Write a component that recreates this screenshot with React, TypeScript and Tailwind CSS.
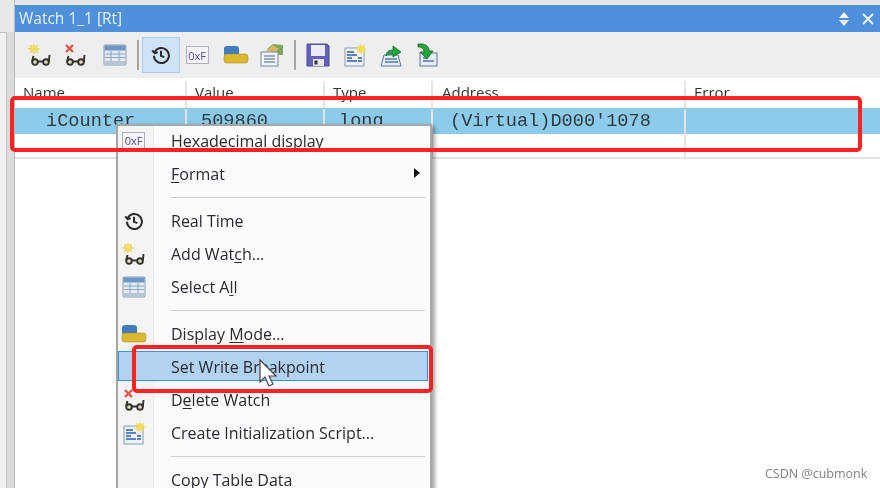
import type { ReactNode } from "react";

const Glasses = () => (
    <g fill="none" stroke="#33332c" strokeWidth="1.900">
        <circle cx="7" cy="19" r="2.800" fill="#e2decb" />
        <circle cx="18" cy="19" r="2.800" fill="#e2decb" />
        <path d="M9.500 18.500h6M20.800 19 21.500 12M4.200 18l1.300-5" />
    </g>
);

const AddWatchIcon = () => (
    <svg width="24" height="24" viewBox="0 0 24 24">
        <Glasses />
        <path d="M6 1l1 2.500 2.500-1.500-.5 3 3 1-3 1 .5 3-2.500-1.500-1 2.500-1-2.500-2.500 1.500.5-3-3-1 3-1-.5-3 2.500 1.500z" fill="#f3dd66" stroke="#e9cf50" strokeWidth="0.5" />
    </svg>
);

const DeleteWatchIcon = () => (
    <svg width="24" height="24" viewBox="0 0 24 24">
        <Glasses />
        <path d="M3 2l7 7M10 2l-7 7" stroke="#e5574a" strokeWidth="2.400" />
    </svg>
);

const TableIcon = () => (
    <svg width="24" height="24" viewBox="0 0 24 24">
        <rect x="1" y="2" width="22" height="20" rx="1" fill="#e3e9f1" stroke="#8a9cb3" />
        <rect x="1.500" y="2.500" width="21" height="5" fill="#6e95c4" />
        <rect x="1.500" y="18" width="21" height="3.500" fill="#b9c6d6" />
        <path d="M8 8v10M16 8v10M2 11h20M2 14.500h20" stroke="#8ea6c4" strokeWidth="1" />
    </svg>
);

const ClockIcon = () => (
    <svg width="20" height="20" viewBox="0 0 24 24" fill="none" stroke="#2a2a2a" strokeWidth="2.400">
        <path d="M4.500 8.500A9 9 0 1 1 3.500 13" />
        <path d="M1.500 6.500l3 3.500 3.500-1.500" />
        <path d="M12 7v6l4 1.500" />
    </svg>
);

const HexIcon = () => (
    <div className="flex h-[18px] w-[23px] items-center justify-center border border-[#b0b0ba] bg-[#f4f4fa] text-[11px] leading-none font-medium text-[#55499f]">
        0xF
    </div>
);

const ModeIcon = () => (
    <svg width="26" height="24" viewBox="0 0 26 24">
        <rect x="1" y="3" width="15" height="10" rx="3" fill="#3f7dbc" />
        <rect x="1" y="11" width="24" height="9" rx="3" fill="#d9b832" stroke="#ab8e20" strokeWidth="0.6" />
    </svg>
);

const PropsIcon = () => (
    <svg width="26" height="24" viewBox="0 0 26 24">
        <path d="M8 6l6-5 10 1v10h-4z" fill="#7fa65a" />
        <path d="M7 8l7-6 6 4-4 4z" fill="#d8b868" />
        <rect x="2" y="9" width="17" height="14" fill="#f2f4f8" stroke="#7a8798" />
        <path d="M5 13h11M5 16h11M5 19h11" stroke="#7c93b0" strokeWidth="1.400" />
    </svg>
);

const SaveIcon = () => (
    <svg width="24" height="24" viewBox="0 0 24 24">
        <path d="M1 1h20l2 2v20H1z" fill="#6660b8" stroke="#4d4896" />
        <rect x="5" y="2" width="14" height="11" fill="#eceaf6" />
        <rect x="7" y="16" width="11" height="7" fill="#e6e6ee" />
        <rect x="8.500" y="17.500" width="3" height="4" fill="#333" />
    </svg>
);

const ScriptIcon = () => (
    <svg width="24" height="24" viewBox="0 0 24 24">
        <rect x="2" y="5" width="19" height="18" fill="#eef2f8" stroke="#8a9ab0" />
        <path d="M4 9h7M4 12h10M4 15h5M4 18h10M15 15h4M15 18h4" stroke="#2f5ea8" strokeWidth="1.600" />
        <path d="M18 0l1 3 3-1-1 3 3 1-3 1 1 3-3-1-1 3-1-3-3 1 1-3-3-1 3-1-1-3 3 1z" fill="#f5dc5c" />
    </svg>
);

const ExportIcon = () => (
    <svg width="24" height="24" viewBox="0 0 24 24">
        <path d="M5 12h14l3 11H2z" fill="#e8eef6" stroke="#5f7692" />
        <path d="M6 16h12M6 19h13" stroke="#4f78a8" strokeWidth="1.400" />
        <path d="M7 13c0-4 3-6 7-6V3l8 6-8 5v-3c-3 0-5 0-7 2z" fill="#22a53c" stroke="#14682a" strokeWidth="0.8" />
    </svg>
);

const ImportIcon = () => (
    <svg width="24" height="24" viewBox="0 0 24 24">
        <rect x="5" y="10" width="17" height="13" fill="#e8eef6" stroke="#5f7692" />
        <path d="M8 15h4M8 18h11" stroke="#4f78a8" strokeWidth="1.400" />
        <path d="M3 1h5c4 1 6 3 6 7h4l-6 8-7-7h4c0-3-2-5-6-5z" fill="#22a53c" stroke="#14682a" strokeWidth="0.8" />
    </svg>
);

const Tool = ({ left, children, active = false }: { left: number; children: ReactNode; active?: boolean }) => (
    <div
        className={`flex h-[36px] w-[38px] shrink-0 items-center justify-center ${active ? "border border-[#a8cdf0] bg-[#cfe3f6]" : ""}`}
        style={{ marginLeft: left }}
    >
        {children}
    </div>
);

const Divider = ({ left }: { left: number }) => (
    <div className="h-[30px] w-[2px] shrink-0 bg-[#a5a5a5]" style={{ marginLeft: left }} />
);

const Cell = ({ w, children, mono = false, pad = 8 }: { w: number; children?: ReactNode; mono?: boolean; pad?: number }) => (
    <div
        className={`h-full shrink-0 overflow-hidden border-r-2 border-[#e4e4e4] whitespace-pre ${mono ? "font-['Liberation_Mono',monospace] text-[18.6px] leading-[25px] text-[#2e3a44]" : ""}`}
        style={{ width: w, paddingLeft: pad }}
    >
        {children}
    </div>
);

const MenuItem = ({ icon, children, arrow = false, hovered = false }: { icon?: ReactNode; children: ReactNode; arrow?: boolean; hovered?: boolean }) => (
    <div className="relative flex h-[33px] items-center">
        {hovered && <div className="absolute top-[1px] right-[2px] bottom-[2px] left-0 border border-[#3d8edb] bg-[#b1d2f0]" />}
        <div className="relative flex w-[31px] shrink-0 items-center justify-center">{icon}</div>
        <div className="relative ml-[22px] text-[16px] leading-none text-[#2a2a33]">{children}</div>
        {arrow && <div className="absolute top-[11px] right-[10px] h-0 w-0 border-y-[5px] border-l-[6px] border-y-transparent border-l-[#111]" />}
    </div>
);

const MenuSep = ({ h }: { h: string }) => (
    <div className={`flex items-center pl-[53px] pr-[5px] ${h}`}>
        <div className="h-[1px] w-full bg-[#cfcfcf]" />
    </div>
);

const App = () => {
    return (
        <div className="relative flex h-[488px] w-[880px] overflow-hidden bg-white font-['Open_Sans',sans-serif] blur-[0.5px]">
            {/* dock edge on the left */}
            <div className="flex w-[15px] shrink-0 flex-col border-r border-[#bcbcbc]">
                <div className="h-[32px] shrink-0 bg-[#e8e8e8]" />
                <div className="flex flex-1">
                    <div className="w-[7px] border-t border-r border-[#bcbcbc] bg-[#f1f1f1]" />
                    <div className="flex-1 bg-[#dcdcdc]" />
                </div>
            </div>
            <div className="flex min-w-0 flex-1 flex-col">
                <div className="h-[5px] shrink-0 bg-[#e8e8e8]" />
                <div className="flex h-[27px] items-center justify-between bg-[#4f90dc] pr-[5px] pl-[4px]">
                    <span className="text-[15.5px] text-[#e8f1fb]">Watch 1_1 [Rt]</span>
                    <div className="flex items-center gap-[11px]">
                        <svg width="12" height="16" viewBox="0 0 12 16" fill="#eef4fc">
                            <path d="M6 1l5 6H1zM6 15l5-6H1z" />
                        </svg>
                        <svg width="14" height="14" viewBox="0 0 14 14" stroke="#eef4fc" strokeWidth="2">
                            <path d="M2 2l10 10M12 2L2 12" />
                        </svg>
                    </div>
                </div>
                <div className="flex h-[46px] items-center bg-[#eeeeee]">
                    <Tool left={6}><AddWatchIcon /></Tool>
                    <Tool left={-3}><DeleteWatchIcon /></Tool>
                    <Tool left={2}><TableIcon /></Tool>
                    <Divider left={3} />
                    <Tool left={3} active><ClockIcon /></Tool>
                    <Tool left={-2}><HexIcon /></Tool>
                    <Tool left={1}><ModeIcon /></Tool>
                    <Tool left={-2}><PropsIcon /></Tool>
                    <Divider left={3} />
                    <Tool left={3}><SaveIcon /></Tool>
                    <Tool left={-1}><ScriptIcon /></Tool>
                    <Tool left={-2}><ExportIcon /></Tool>
                    <Tool left={-2}><ImportIcon /></Tool>
                </div>
                <div className="flex h-[30px] bg-white pt-[3px] text-[15px] leading-[22px] text-[#333]">
                    <Cell w={172}>Name</Cell>
                    <Cell w={138}>Value</Cell>
                    <Cell w={108}>Type</Cell>
                    <Cell w={253} pad={9}>Address</Cell>
                    <div className="pl-[8px]">Error</div>
                </div>
                <div className="flex h-[26px] bg-[#8ccbea] pt-[1px]">
                    <Cell w={172} mono pad={31}>iCounter</Cell>
                    <Cell w={138} mono pad={14}>509860</Cell>
                    <Cell w={108} mono pad={14}>long</Cell>
                    <Cell w={253} mono pad={17}>(Virtual)D000'1078</Cell>
                </div>
                <div className="flex h-[25px] border-b-2 border-[#e4e4e4] bg-white">
                    <Cell w={172} />
                    <Cell w={138} />
                    <Cell w={108} />
                    <Cell w={253} />
                </div>
            </div>

            {/* context menu */}
            <div className="absolute top-[124px] left-[116px] h-[380px] w-[316px] border-2 border-[#a6a6a6] bg-[#fbfbfb] shadow-[3px_2px_4px_rgba(0,0,0,0.35)]">
                <div className="absolute top-0 bottom-0 left-0 w-[36px] border-r border-[#ececec] bg-[#f4f4f4]" />
                <div className="relative -mt-[2px]">
                    <MenuItem icon={<HexIcon />}>Hexadecimal display</MenuItem>
                    <MenuItem arrow><u className="underline-offset-2">F</u>ormat</MenuItem>
                    <MenuSep h="h-[14px]" />
                    <MenuItem icon={<ClockIcon />}>Real Time</MenuItem>
                    <MenuItem icon={<AddWatchIcon />}>Add Wat<u className="underline-offset-2">c</u>h...</MenuItem>
                    <MenuItem icon={<TableIcon />}>Select A<u className="underline-offset-2">l</u>l</MenuItem>
                    <MenuSep h="h-[14px]" />
                    <MenuItem icon={<ModeIcon />}>Display <u className="underline-offset-2">M</u>ode...</MenuItem>
                    <MenuItem hovered>Set Write Breakpoint</MenuItem>
                    <MenuItem icon={<DeleteWatchIcon />}>D<u className="underline-offset-2">e</u>lete Watch</MenuItem>
                    <MenuItem icon={<ScriptIcon />}>Create Initialization Script...</MenuItem>
                    <MenuSep h="h-[14px]" />
                    <MenuItem>Copy Table Data</MenuItem>
                </div>
            </div>

            {/* red markers, drawn over the menu */}
            <div className="absolute top-[96px] left-[10px] h-[56px] w-[852px] rounded-[5px] border-4 border-[#fa2323]" />
            <div className="absolute top-[345px] left-[132px] h-[48px] w-[301px] rounded-[5px] border-4 border-[#fa2323]" />

            {/* mouse pointer */}
            <svg className="absolute top-[358px] left-[258px]" width="20" height="30" viewBox="0 0 20 30">
                <path d="M2 2v22l5-5 4 9 4-2-4-8h7z" fill="#fff" stroke="#444" strokeWidth="1.200" />
            </svg>

            <div className="absolute top-[465px] left-[765px] text-[12.5px] leading-[17px] text-[#808080]">CSDN @cubmonk</div>
        </div>
    );
};

export default App;
